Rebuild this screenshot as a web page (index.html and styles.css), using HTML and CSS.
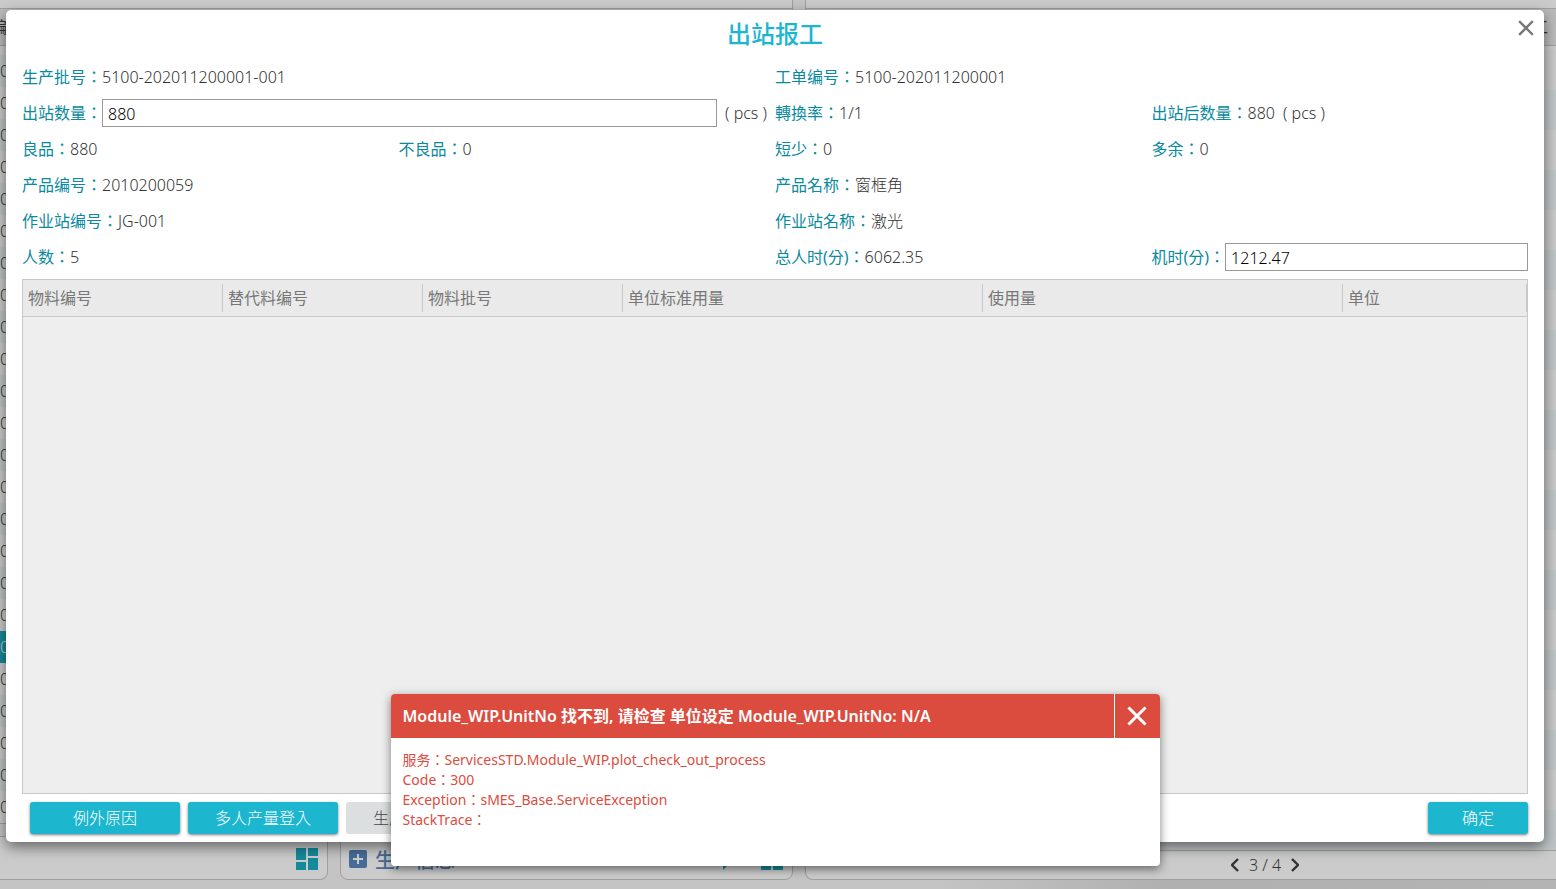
FILE: index.html
```html
<!DOCTYPE html>
<html lang="zh-Hant">
<head>
    <meta charset="UTF-8">
    <meta name="viewport" content="width=device-width, initial-scale=1.0">
    <title>出站报工</title>
    <link rel="stylesheet" href="styles.css">
</head>
<body>
    <svg class="sprite" aria-hidden="true">
        <symbol id="icon-board" viewBox="0 0 22 22">
            <path d="M0 0h10v12H0zM12 0h10v8H12zM0 14h10v8H0zM12 10h10v12H12z" fill="currentColor"/>
        </symbol>
        <symbol id="icon-close" viewBox="0 0 16 16">
            <path d="M2 2l12 12M14 2L2 14" fill="none" stroke="currentColor" stroke-width="2.4" stroke-linecap="square"/>
        </symbol>
    </svg>

    <main class="app" aria-hidden="true">
        <div class="column">
            <section class="panel panel-top">
                <div class="panel-head"><span class="head-left">编</span></div>
                <div class="rows rows-left"></div>
            </section>
            <div class="bottom-panels">
                <section class="panel tools">
                    <svg class="icon-board"><use href="#icon-board"/></svg>
                </section>
                <section class="panel info">
                    <svg class="icon-plus" viewBox="0 0 18 18">
                        <rect width="18" height="18" rx="2" fill="#476c98"/>
                        <path d="M4 9h10M9 4v10" stroke="#ccc" stroke-width="2"/>
                    </svg>
                    <h2>生产信息</h2>
                    <svg class="icon-arrow" viewBox="0 0 16 22"><path d="M2 0h12v10L2 22z" fill="currentColor"/></svg>
                    <svg class="icon-board"><use href="#icon-board"/></svg>
                </section>
            </div>
        </div>
        <section class="panel panel-side">
            <div class="panel-head head-right">工</div>
            <div class="rows rows-right"></div>
            <div class="pager">
                <svg viewBox="0 0 8 14"><path d="M7 1L1 7l6 6" fill="none" stroke="currentColor" stroke-width="2.4"/></svg>
                <span>3 / 4</span>
                <svg viewBox="0 0 8 14"><path d="M1 1l6 6-6 6" fill="none" stroke="currentColor" stroke-width="2.4"/></svg>
            </div>
        </section>
    </main>

    <div class="overlay">
        <div class="dialog" role="dialog" aria-labelledby="dialog-title">
            <header class="dialog-header">
                <h1 id="dialog-title">出站报工</h1>
                <button class="dialog-close" type="button" aria-label="关闭"><svg><use href="#icon-close"/></svg></button>
            </header>

            <form class="fields">
                <div class="field wide"><span class="label">生产批号：</span>5100-202011200001-001</div>
                <div class="field wide"><span class="label">工单编号：</span>5100-202011200001</div>

                <div class="field wide">
                    <label class="label" for="qty">出站数量：</label>
                    <input id="qty" type="text" value="880">
                    <span class="unit">( pcs )</span>
                </div>
                <div class="field"><span class="label">轉換率：</span>1/1</div>
                <div class="field"><span class="label">出站后数量：</span>880<span class="unit">( pcs )</span></div>

                <div class="field"><span class="label">良品：</span>880</div>
                <div class="field"><span class="label">不良品：</span>0</div>
                <div class="field"><span class="label">短少：</span>0</div>
                <div class="field"><span class="label">多余：</span>0</div>

                <div class="field wide"><span class="label">产品编号：</span>2010200059</div>
                <div class="field wide"><span class="label">产品名称：</span>窗框角</div>

                <div class="field wide"><span class="label">作业站编号：</span>JG-001</div>
                <div class="field wide"><span class="label">作业站名称：</span>激光</div>

                <div class="field wide"><span class="label">人数：</span>5</div>
                <div class="field"><span class="label">总人时(分)：</span>6062.35</div>
                <div class="field">
                    <label class="label" for="hours">机时(分)：</label>
                    <input id="hours" type="text" value="1212.47">
                </div>
            </form>

            <div class="grid">
                <table>
                    <colgroup>
                        <col class="col-code"><col class="col-code"><col class="col-code">
                        <col class="col-qty"><col class="col-qty"><col>
                    </colgroup>
                    <thead>
                        <tr>
                            <th><span>物料编号</span></th>
                            <th><span>替代料编号</span></th>
                            <th><span>物料批号</span></th>
                            <th><span>单位标准用量</span></th>
                            <th><span>使用量</span></th>
                            <th><span>单位</span></th>
                        </tr>
                    </thead>
                    <tbody></tbody>
                </table>
            </div>

            <footer class="actions">
                <button class="btn" type="button">例外原因</button>
                <button class="btn" type="button">多人产量登入</button>
                <button class="btn btn-off" type="button" disabled>生产批号信息</button>
                <button class="btn btn-ok" type="button">确定</button>
            </footer>

            <div class="toast" role="alert">
                <div class="toast-head">
                    <strong>Module_WIP.UnitNo 找不到, 请检查 单位设定 Module_WIP.UnitNo: N/A</strong>
                    <button type="button" aria-label="关闭"><svg><use href="#icon-close"/></svg></button>
                </div>
                <div class="toast-body">
                    <p>服务：ServicesSTD.Module_WIP.plot_check_out_process</p>
                    <p>Code：300</p>
                    <p>Exception：sMES_Base.ServiceException</p>
                    <p>StackTrace：</p>
                </div>
            </div>
        </div>
    </div>

    <script>
        function fillRows(selector, count, text, selected) {
            const box = document.querySelector(selector);
            for (let i = 0; i < count; i++) {
                const row = document.createElement('div');
                row.className = i === selected ? 'row selected' : 'row';
                row.textContent = text;
                box.appendChild(row);
            }
        }

        fillRows('.rows-left', 24, '0', 18);
        fillRows('.rows-right', 20, '', -1);
    </script>
</body>
</html>
```

FILE: styles.css
```css
* { margin: 0; padding: 0; box-sizing: border-box; }

body {
    height: 100vh;
    position: relative;
    overflow: hidden;
    font-family: "Noto Sans", "Noto Sans CJK TC", sans-serif;
    font-size: 16px;
    font-weight: 300;
    color: #333;
    background: linear-gradient(90deg, #c4c4c4 60%, #b0b0b0 75%, #b4b4b4);
}

button, input { font: inherit; }

.sprite { display: none; }

/* Page behind the dialog */
.app {
    height: 100%;
    padding-bottom: 9px;
    display: grid;
    grid-template-columns: 793fr 751fr;
    gap: 12px;
}

.column {
    display: flex;
    flex-direction: column;
    gap: 12px;
    min-height: 0;
    background: #c4c4c4;
}

.panel {
    background: #cbcbcb;
    border: 1px solid #9f9f9f;
    border-top: none;
    border-left: none;
    border-radius: 0 0 8px 0;
}

.panel-top {
    flex: 1;
    min-height: 0;
    padding-top: 8px;
    overflow: hidden;
}

.panel-head {
    height: 38px;
    line-height: 36px;
    background: #bababa;
    border-top: 1px solid #9f9f9f;
    border-bottom: 1px solid #9f9f9f;
    font-weight: 400;
    overflow: hidden;
}

.head-left { margin-left: -9px; }
.head-right { padding-right: 8px; text-align: right; }

.rows-left { padding-top: 9px; }

.row {
    height: 32px;
    line-height: 32px;
}

.row:nth-child(odd) { background: #bfc5c6; }
.row.selected { background: #15899a; color: #ccc; }

.bottom-panels {
    height: 44px;
    display: grid;
    grid-template-columns: 328fr 453fr;
    gap: 12px;
}

.tools, .info {
    display: flex;
    align-items: center;
    padding: 2px 9px 0 8px;
    border-top: 1px solid #9f9f9f;
}

.info {
    border-left: 1px solid #9f9f9f;
    border-radius: 0 0 8px 8px;
}

.info h2 {
    margin-left: 8px;
    font-size: 20px;
    font-weight: 500;
    color: #476c98;
}

.icon-plus { width: 18px; height: 18px; }
.icon-board { width: 22px; height: 22px; color: #158a9b; }
.icon-arrow { width: 16px; height: 22px; margin-left: auto; margin-right: 24px; color: #158a9b; }
.tools .icon-board { margin-left: auto; }

.panel-side {
    display: flex;
    flex-direction: column;
    min-height: 0;
    padding-top: 8px;
    border-left: 1px solid #9f9f9f;
    border-right: none;
    border-radius: 0 0 0 8px;
}

.panel-side .panel-head { flex-shrink: 0; }

.rows-right {
    flex: 1;
    min-height: 0;
    padding-top: 4px;
    overflow: hidden;
}

.rows-right .row { height: 40px; background: #c9c9c9; }
.rows-right .row:nth-child(even) { background: #bfc5c6; }

.pager {
    height: 29px;
    flex-shrink: 0;
    display: flex;
    align-items: center;
    justify-content: center;
    gap: 10px;
    padding-left: 168px;
    border-top: 1px solid #9f9f9f;
}

.pager svg { width: 8px; height: 14px; }

/* Dialog */
.overlay {
    position: absolute;
    inset: 0;
    display: flex;
    padding: 10px 12px 47px 6px;
}

.dialog {
    position: relative;
    flex: 1;
    display: flex;
    flex-direction: column;
    padding: 0 16px 8px;
    background: #fff;
    border-radius: 5px;
    box-shadow: 0 5px 14px rgba(0, 0, 0, 0.5);
}

.dialog-header {
    height: 49px;
    text-align: center;
}

.dialog-header h1 {
    font-size: 24px;
    line-height: 48px;
    font-weight: 500;
    color: #1cb6cf;
}

.dialog-close {
    position: absolute;
    top: 10px;
    right: 10px;
    width: 16px;
    height: 16px;
    border: none;
    background: none;
    color: #777;
    cursor: pointer;
}

.dialog-close svg { display: block; width: 16px; height: 16px; }

.fields {
    display: grid;
    grid-template-columns: repeat(4, 1fr);
    grid-auto-rows: 36px;
}

.field {
    display: flex;
    align-items: center;
    min-width: 0;
    line-height: 20px;
    white-space: pre;
}

.wide { grid-column: span 2; }

.label {
    font-weight: 400;
    color: #0a8a9e;
}

.field input {
    flex: 1;
    min-width: 0;
    height: 28px;
    padding: 2px 5px 0;
    border: 1px solid #999;
    color: #000;
}

.unit {
    min-width: 58px;
    padding: 0 5px;
    text-align: center;
}

.grid {
    flex: 1;
    margin-top: 4px;
    border: 1px solid #c8c8c8;
    background: #eee;
}

.grid table {
    width: 100%;
    table-layout: fixed;
    border-spacing: 0;
}

.col-code { width: 200px; }
.col-qty { width: 360px; }

.grid th {
    height: 37px;
    background: #eaeaea;
    border-bottom: 1px solid #c8c8c8;
    text-align: left;
    font-weight: 400;
    color: #777;
}

.grid th span {
    display: block;
    padding-left: 5px;
    line-height: 28px;
    border-right: 1px solid #c8c8c8;
}

.actions {
    display: flex;
    gap: 8px;
    margin-top: 8px;
    padding-left: 8px;
}

.btn {
    width: 150px;
    height: 32px;
    padding-bottom: 2px;
    border: none;
    border-radius: 3px;
    background: #1cb6cf;
    color: #fff;
    box-shadow: 0 1px 3px rgba(0, 0, 0, 0.5);
    cursor: pointer;
}

.btn-off { background: #dcdfdf; color: #444; box-shadow: none; }
.btn-ok { width: 100px; margin-left: auto; }

/* Error message */
.toast {
    position: absolute;
    left: 25%;
    bottom: -24px;
    width: 50%;
    height: 172px;
    overflow: hidden;
    border-radius: 4px;
    background: #fff;
    box-shadow: 0 3px 10px rgba(0, 0, 0, 0.5);
}

.toast-head {
    display: flex;
    height: 44px;
    background: #dc4c3e;
    color: #fff;
}

.toast-head strong {
    flex: 1;
    padding-left: 12px;
    line-height: 44px;
    font-weight: 600;
}

.toast-head button {
    width: 46px;
    border: none;
    border-left: 1px solid #fff;
    background: none;
    color: #fff;
    cursor: pointer;
}

.toast-head svg { display: block; width: 20px; height: 20px; margin: 0 auto; }

.toast-body {
    padding: 12px;
    font-size: 14px;
    line-height: 20px;
    font-weight: 400;
    color: #dc4c3e;
}
```
